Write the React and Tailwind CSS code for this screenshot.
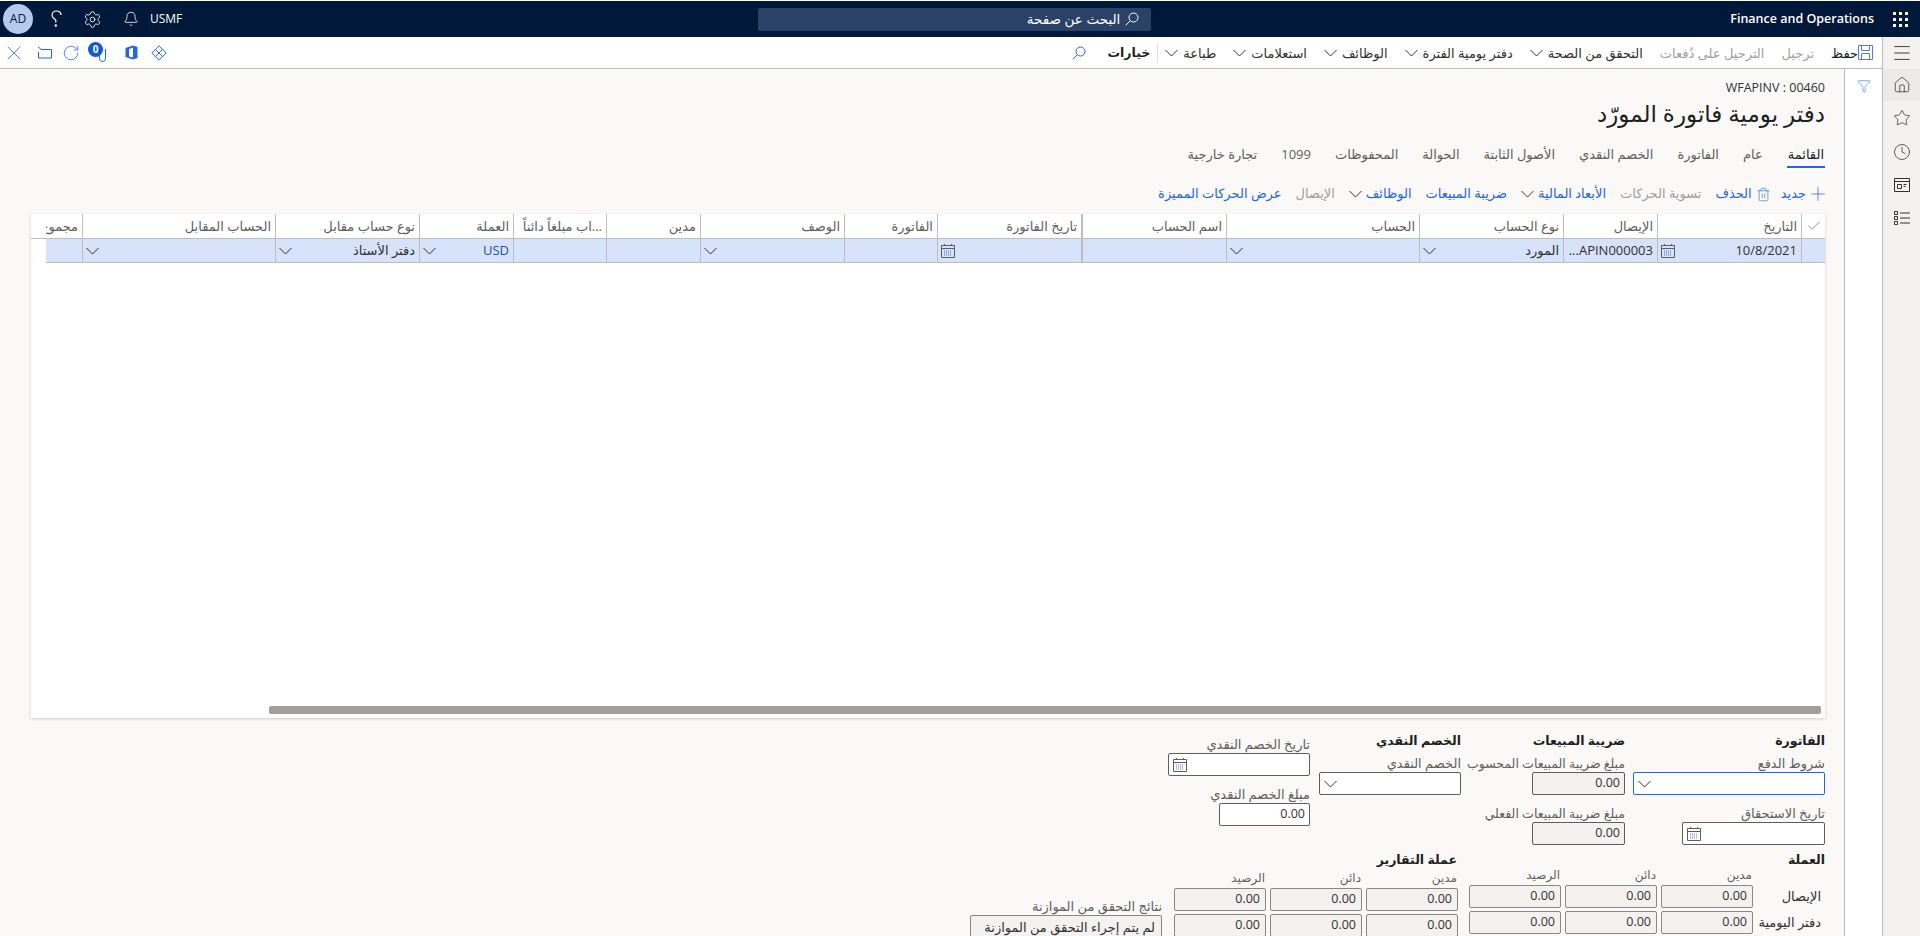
import React from 'react';
import { Bell, Check, Clock, Filter, Home, Menu, Plus, RotateCw, Settings, Star, Trash2, X } from 'lucide-react';

const font = 'font-["Open_Sans","Noto_Sans","DejaVu_Sans",sans-serif]';

const Chevron = ({ stroke = '#323130' }) => (
  <svg width="13" height="8" viewBox="0 0 13 8" fill="none" stroke={stroke} strokeWidth="1" className="shrink-0">
    <path d="M.5 1 6.500 7 12.500 1" />
  </svg>
);

const SearchIcon = ({ stroke }) => (
  <svg width="14" height="14" viewBox="0 0 14 14" fill="none" stroke={stroke} strokeWidth="1" className="shrink-0">
    <circle cx="8.500" cy="5.500" r="4.500" />
    <path d="M5.300 8.700.7 13.300" />
  </svg>
);

const CalendarIcon = () => (
  <svg width="14" height="14" viewBox="0 0 14 14" fill="none" stroke="#605e5c" strokeWidth="1" className="shrink-0">
    <path d="M.5 1.500h13v12H.5zM.5 4.500h13M3.500 0v2M10.500 0v2" />
    <path d="M3 7h8M3 9h8M3 11h8" strokeDasharray="1 1" stroke="#5a78c8" />
  </svg>
);

const SaveIcon = () => (
  <svg width="15" height="15" viewBox="0 0 15 15" fill="none" stroke="#5a78e8" strokeWidth="1">
    <path d="M.5.5h14v14H.5zM3.500.5v5h8v-5M3.500 14.500v-6h8v6" />
  </svg>
);

const WorkspaceIcon = () => (
  <svg width="16" height="14" viewBox="0 0 16 14" fill="none" stroke="#323130" strokeWidth="1">
    <path d="M.5 .5h15v13H.5zM.5 3.500h15M3.500 6.500h4v4h-4zM9.500 6.500h3M9.500 8.500h2" />
  </svg>
);

const ListIcon = () => (
  <svg width="16" height="14" viewBox="0 0 16 14" fill="none" stroke="#323130" strokeWidth="1">
    <path d="M.5.5h3v3h-3zM.5 5.500h3v3h-3zM.5 10.500h3v3h-3zM6 2h10M6 7h10M6 12h10" />
  </svg>
);

const HelpIcon = () => (
  <svg width="14" height="18" viewBox="0 0 14 18" fill="none" stroke="#fff" strokeWidth="1.2">
    <path d="M12 5C12 2.500 10 1 7.500 1S3 2.800 3 5.200c0 2.600 2.800 3.400 3.800 5v2.300" />
    <circle cx="6.800" cy="15.500" r=".6" fill="#fff" />
  </svg>
);

const WaffleIcon = () => (
  <svg width="15" height="15" viewBox="0 0 15 15" fill="#fff">
    {[0, 6, 12].map((y) => [0, 6, 12].map((x) => <rect key={`${x}-${y}`} x={x} y={y} width="3" height="3" />))}
  </svg>
);

const OpenIcon = () => (
  <svg width="15" height="13" viewBox="0 0 15 13" fill="none" stroke="#2266e3" strokeWidth="1">
    <path d="M4 3.500h10.500v8.500H1.500V6M1 1l3.500 2.500" />
  </svg>
);

const AttachIcon = () => (
  <div className="relative h-[20px] w-[18px]">
    <svg width="10" height="15" viewBox="0 0 10 15" fill="none" stroke="#2266e3" strokeWidth="1" className="absolute left-[9px] top-[5px]">
      <path d="M8.500 1v9.500a3 3 0 0 1-6 0V3" />
    </svg>
    <span className="absolute left-0 top-[-1px] flex h-[15px] w-[15px] items-center justify-center rounded-full bg-[#0f5bd3] text-[10px] font-bold text-white">0</span>
  </div>
);

const OfficeIcon = () => (
  <svg width="13" height="15" viewBox="0 0 13 15">
    <path d="M.5 3 8 .5l4.500 1.500v11L8 14.500.5 12z" fill="#2266e3" />
    <path d="M8 2.500v10L4 11.500V4z" fill="#fff" />
  </svg>
);

const DiamondIcon = () => (
  <svg width="16" height="16" viewBox="0 0 16 16" fill="none" stroke="#2266e3" strokeWidth="1">
    <path d="M8 .8 15.200 8 8 15.200.8 8zM4.400 4.400l7.200 7.200M11.600 4.400l-7.200 7.200" />
  </svg>
);

const menuItems = [
  { label: 'ترجيل', off: true },
  { label: 'الترحيل على دُفعات', off: true },
  { label: 'التحقق من الصحة', menu: true },
  { label: 'دفتر يومية الفترة', menu: true },
  { label: 'الوظائف', menu: true },
  { label: 'استعلامات', menu: true },
  { label: 'طباعة', menu: true },
];

const tabs = ['القائمة', 'عام', 'الفاتورة', 'الخصم النقدي', 'الأصول الثابتة', 'الحوالة', 'المحفوظات', '1099', 'تجارة خارجية'];

const actions = [
  { label: 'الحذف', gap: 'mr-[10px]', icon: <Trash2 size={15} strokeWidth={1} className="text-[#2266e3]" /> },
  { label: 'تسوية الحركات', gap: 'mr-[14px]', off: true },
  { label: 'الأبعاد المالية', gap: 'mr-[14px]', menu: true },
  { label: 'ضريبة المبيعات', gap: 'mr-[14px]' },
  { label: 'الوظائف', gap: 'mr-[14px]', menu: true },
  { label: 'الإيصال', gap: 'mr-[14px]', off: true },
  { label: 'عرض الحركات المميزة', gap: 'mr-[14px]' },
];

const columns = [
  { title: 'التاريخ', w: 'w-[144px]', value: '10/8/2021', cal: true },
  { title: 'الإيصال', w: 'w-[94px]', value: '...APIN000003', ltr: true },
  { title: 'نوع الحساب', w: 'w-[144px]', value: 'المورد', arrow: true },
  { title: 'الحساب', w: 'w-[193px]', arrow: true },
  { title: 'اسم الحساب', w: 'w-[145px]', thick: true },
  { title: 'تاريخ الفاتورة', w: 'w-[144px]', cal: true },
  { title: 'الفاتورة', w: 'w-[93px]' },
  { title: 'الوصف', w: 'w-[144px]', arrow: true },
  { title: 'مدين', w: 'w-[94px]' },
  { title: '...اب مبلغاً دائناً', w: 'w-[93px]' },
  { title: 'العملة', w: 'w-[94px]', value: 'USD', blue: true, arrow: true },
  { title: 'نوع حساب مقابل', w: 'w-[144px]', value: 'دفتر الأستاذ', arrow: true },
  { title: 'الحساب المقابل', w: 'w-[193px]', arrow: true },
];

const Label = ({ children, className = '', size = 'text-[13px]' }) => (
  <div className={`h-[17px] whitespace-nowrap leading-[17px] text-[#605e5c] ${size} ${className}`}>{children}</div>
);

const Heading = ({ children, className = '' }) => (
  <div className={`h-[17px] whitespace-nowrap text-[12.5px] font-semibold leading-[17px] text-[#201f1e] ${className}`}>{children}</div>
);

const Field = ({ w, value, readOnly, focus, icon }) => (
  <div
    className={`flex h-[23px] items-center justify-end rounded-[2px] border px-[4px] text-[12.5px] text-[#323130] ${w} ${
      focus ? 'border-[#2266e3]' : 'border-[#605e5c]'
    } ${readOnly ? 'bg-[#f3f2f1]' : 'bg-white'}`}
  >
    {value && <span>{value}</span>}
    {icon}
  </div>
);

const Amount = () => (
  <div className="flex h-[23px] w-[92px] items-center justify-end rounded-[2px] border border-[#8a8886] bg-[#f3f2f1] px-[5px] text-[12.5px] text-[#323130]" dir="ltr">
    0.00
  </div>
);

const AmountGroup = ({ headers, title, clip }) => (
  <div className="w-[284px] shrink-0">
    <Heading className={clip ? 'h-[14px] overflow-hidden pr-px' : ''}>{title}</Heading>
    <div className={`flex h-[17px] gap-[4px] text-[12px] leading-[13px] text-[#605e5c] ${clip ? 'mt-[3px]' : ''}`}>
      {headers.map((h) => (
        <div key={h} className="w-[92px] pr-[1px]">{h}</div>
      ))}
    </div>
    <div className="flex gap-[4px]">
      <Amount />
      <Amount />
      <Amount />
    </div>
    <div className="mt-[3px] flex gap-[4px]">
      <Amount />
      <Amount />
      <Amount />
    </div>
  </div>
);

export default function App() {
  return (
    <div dir="rtl" className={`flex h-[936px] flex-col overflow-hidden bg-white text-[#323130] ${font}`}>
      {/* Top navigation */}
      <header dir="ltr" className="relative mt-px flex h-[36px] shrink-0 items-center bg-[#00183a] text-white">
        <div className="ml-[3px] flex h-[30px] w-[30px] items-center justify-center rounded-full bg-[#b6caf0] text-[12px] text-[#00183a]">AD</div>
        <div className="ml-[16px]"><HelpIcon /></div>
        <Settings size={19} strokeWidth={1.1} className="ml-[20px]" />
        <Bell size={16} strokeWidth={1.2} className="ml-[21px]" />
        <span className="ml-[11px] text-[12px]">USMF</span>
        <div className="ml-[576px] flex h-[23px] w-[393px] items-center justify-end gap-[5px] rounded-[2px] bg-[#2a4268] pr-[12px] text-[13.5px]">
          <span dir="rtl">البحث عن صفحة</span>
          <SearchIcon stroke="#fff" />
        </div>
        <div className="ml-auto flex items-center">
          <span className="text-[12.5px] font-semibold">Finance and Operations</span>
          <div className="ml-[19px] mr-[12px]"><WaffleIcon /></div>
        </div>
      </header>

      <div className="flex min-h-0 flex-1">
        {/* Navigation rail */}
        <aside className="flex w-[37px] shrink-0 flex-col items-center bg-[#f3f2f1]">
          <div className="flex h-[32px] w-full items-center justify-center"><Menu size={22} strokeWidth={1} /></div>
          <div className="flex h-[32px] w-full items-center justify-center bg-[#edebe9]"><Home size={18} strokeWidth={1} /></div>
          <div className="flex h-[34px] items-center justify-center"><Star size={18} strokeWidth={1} /></div>
          <div className="flex h-[33px] items-center justify-center"><Clock size={18} strokeWidth={1} /></div>
          <div className="flex h-[33px] items-center justify-center"><WorkspaceIcon /></div>
          <div className="flex h-[33px] items-center justify-center"><ListIcon /></div>
        </aside>

        <div className="flex min-w-0 flex-1 flex-col border-r border-[#bdbdbd]">
          {/* Command bar */}
          <div className="flex h-[32px] shrink-0 items-center justify-between border-b border-[#bdbdbd] bg-white text-[13px] leading-[18px]">
            <div className="flex items-center">
              <div className="mr-[9px] flex items-center">
                <SaveIcon />
                <span className="text-[#201f1e]">حفظ</span>
              </div>
              {menuItems.map((m) => (
                <div key={m.label} className={`mr-[17px] flex items-center gap-[5px] ${m.off ? 'text-[#a19f9d]' : 'text-[#323130]'}`}>
                  <span className="whitespace-nowrap">{m.label}</span>
                  {m.menu && <Chevron />}
                </div>
              ))}
              <div className="mr-[7px] h-[20px] w-px bg-[#e1dfdd]" />
              <span className="mr-[7px] text-[12.5px] font-semibold text-[#201f1e]">خيارات</span>
              <div className="mr-[21px]"><SearchIcon stroke="#2266e3" /></div>
            </div>
            <div className="ml-[2px] flex items-center">
              <DiamondIcon />
              <div className="mr-[13px]"><OfficeIcon /></div>
              <div className="mr-[19px]"><AttachIcon /></div>
              <RotateCw size={18} strokeWidth={1} className="mr-[8px] text-[#2266e3]" />
              <div className="mr-[10px]"><OpenIcon /></div>
              <X size={24} strokeWidth={0.8} className="mr-[11px] text-[#2266e3]" />
            </div>
          </div>

          <div className="flex min-h-0 flex-1">
            {/* Filter pane */}
            <div className="flex w-[38px] shrink-0 justify-center border-l border-[#bdbdbd] bg-white pt-[10px]">
              <Filter size={14} strokeWidth={1} className="text-[#2266e3]" />
            </div>

            {/* Page content */}
            <main className="min-w-0 flex-1 bg-[#faf9f8] pl-[31px] pr-[19px]">
              <div dir="ltr" className="mt-[10px] h-[18px] text-right text-[12.5px] leading-[18px] text-[#323130]">WFAPINV : 00460</div>
              <h1 className="h-[32px] whitespace-nowrap text-[23px] font-normal leading-[32px] text-[#201f1e]">دفتر يومية فاتورة المورّد</h1>

              <div className="mt-[14px] flex h-[25px] items-start gap-[24px] text-[13px] leading-[22px] text-[#605e5c]">
                {tabs.map((t, i) => (
                  <div key={t} className={`h-[25px] whitespace-nowrap ${i === 0 ? 'border-b-2 border-[#2266e3] px-[1px] text-[#201f1e]' : ''}`}>{t}</div>
                ))}
              </div>

              <div className="mb-[8px] mt-[14px] flex h-[24px] items-center whitespace-nowrap text-[13px] text-[#2266e3]">
                <Plus size={22} strokeWidth={0.8} className="-mr-[4px]" />
                <span className="mr-px">جديد</span>
                {actions.map((a) => (
                  <div key={a.label} className={`flex items-center gap-[4px] ${a.gap} ${a.off ? 'text-[#a19f9d]' : ''}`}>
                    {a.icon}
                    <span>{a.label}</span>
                    {a.menu && <Chevron />}
                  </div>
                ))}
              </div>

              {/* Journal lines grid */}
              <section className="flex h-[504px] flex-col overflow-hidden bg-white shadow-[0_1px_3px_rgba(0,0,0,0.18)]">
                <div className="flex h-[25px] shrink-0 border-b border-[#bdbdbd] text-[13px] leading-[24px] text-[#605e5c]">
                  <div className="flex w-[24px] shrink-0 items-center justify-center border-l border-[#bdbdbd]">
                    <Check size={16} strokeWidth={1} />
                  </div>
                  {columns.map((c) => (
                    <div key={c.title} className={`shrink-0 overflow-hidden whitespace-nowrap border-[#bdbdbd] pr-[4px] ${c.w} ${c.thick ? 'border-l-2' : 'border-l'}`}>
                      {c.title}
                    </div>
                  ))}
                  <div className="ml-[15px] min-w-0 flex-1 overflow-hidden whitespace-nowrap pr-[4px]">مجموع</div>
                </div>
                <div className="flex h-[24px] shrink-0 pl-[15px]">
                  <div className="flex h-[24px] w-full border-b border-[#bdbdbd] bg-[#d6e3fa] text-[13px] leading-[23px] text-[#323130]">
                    <div className="w-[24px] shrink-0 border-l border-[#bdbdbd]" />
                    {columns.map((c) => (
                      <div key={c.title} className={`flex shrink-0 items-center justify-between overflow-hidden whitespace-nowrap border-[#bdbdbd] pl-[3px] pr-[4px] ${c.w} ${c.thick ? 'border-l-2' : 'border-l'}`}>
                        <span dir={c.ltr ? 'ltr' : undefined} className={c.blue ? 'text-[#1f4fa8]' : ''}>{c.value}</span>
                        {c.cal && <CalendarIcon />}
                        {c.arrow && <Chevron />}
                      </div>
                    ))}
                  </div>
                </div>
                <div className="flex-1" />
                <div className="mb-[4px] mr-[4px] h-[8px] w-[1552px] shrink-0 rounded-[2px] bg-[#a19f9d]" />
              </section>

              {/* Header details */}
              <div className="flex h-[133px] gap-[9px]">
                <div className="w-[192px] shrink-0 pt-[14px]">
                  <Heading>الفاتورة</Heading>
                  <Label className="mt-[6px]">شروط الدفع</Label>
                  <Field w="w-[192px]" focus icon={<Chevron />} />
                  <Label className="mt-[10px]">تاريخ الاستحقاق</Label>
                  <Field w="w-[143px]" icon={<CalendarIcon />} />
                </div>
                <div className="-mr-px w-[155px] shrink-0 pt-[14px]">
                  <Heading>ضريبة المبيعات</Heading>
                  <Label className="mt-[6px]" size="text-[12.5px]">مبلغ ضريبة المبيعات المحسوب</Label>
                  <div dir="ltr" className="flex justify-end"><Field w="w-[93px]" readOnly value="0.00" /></div>
                  <Label className="mt-[10px]" size="text-[12.5px]">مبلغ ضريبة المبيعات الفعلي</Label>
                  <div dir="ltr" className="flex justify-end"><Field w="w-[93px]" readOnly value="0.00" /></div>
                </div>
                <div className="w-[142px] shrink-0 pt-[14px]">
                  <Heading>الخصم النقدي</Heading>
                  <Label className="mt-[6px]">الخصم النقدي</Label>
                  <Field w="w-[142px]" icon={<Chevron />} />
                </div>
                <div className="w-[142px] shrink-0 pt-[18px]">
                  <Label>تاريخ الخصم النقدي</Label>
                  <Field w="w-[142px]" icon={<CalendarIcon />} />
                  <Label className="mt-[10px]">مبلغ الخصم النقدي</Label>
                  <div dir="ltr" className="flex justify-end"><Field w="w-[91px]" value="0.00" /></div>
                </div>
              </div>

              {/* Amount totals */}
              <div className="flex">
                <div className="w-[72px] shrink-0 pt-[34px] text-[13px] text-[#323130]">
                  <Heading className="-mt-[34px] mb-[17px]">العملة</Heading>
                  <div className="h-[26px] pr-[4px] leading-[23px]">الإيصال</div>
                  <div className="h-[23px] whitespace-nowrap pr-[4px] leading-[23px]">دفتر اليومية</div>
                </div>
                <AmountGroup title="" headers={['مدين', 'دائن', 'الرصيد']} />
                <div className="mr-[11px]">
                  <AmountGroup title="عملة التقارير" clip headers={['مدين', 'دائن', 'الرصيد']} />
                </div>
                <div className="mr-[12px] w-[192px] shrink-0 pt-[47px]">
                  <Label>نتائج التحقق من الموازنة</Label>
                  <div className="h-[30px] rounded-[2px] border border-[#8a8886] bg-[#f3f2f1] px-[6px] text-[13px] leading-[22px]">لم يتم إجراء التحقق من الموازنة</div>
                </div>
              </div>
            </main>
          </div>
        </div>
      </div>
    </div>
  );
}
